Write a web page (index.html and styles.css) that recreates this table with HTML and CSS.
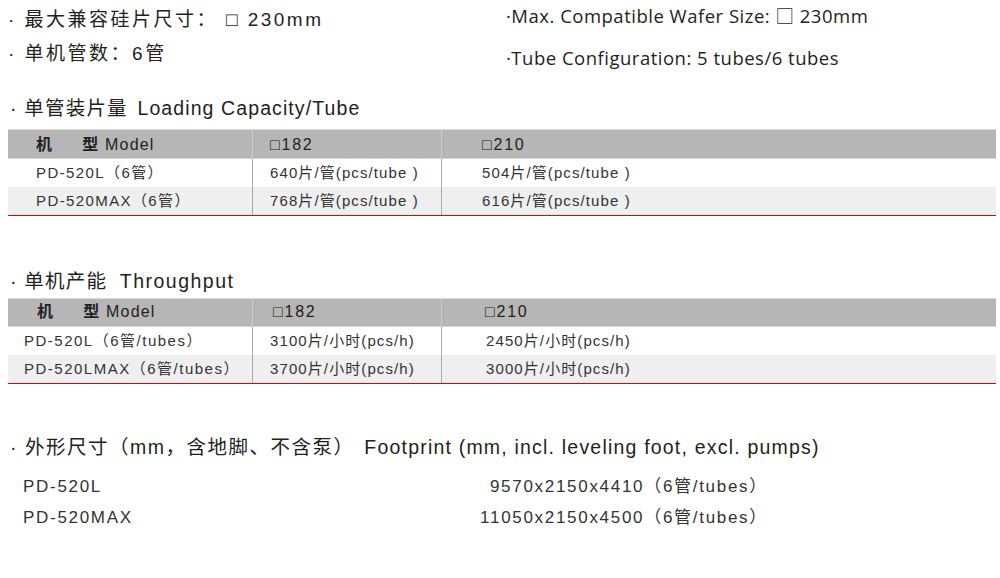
FILE: index.html
```html
<!DOCTYPE html>
<html lang="zh-CN">
<head>
<meta charset="utf-8">
<title>PD-520 规格</title>
<link rel="stylesheet" href="styles.css">
</head>
<body>
<div class="page">
  <div class="intro">
    <ul class="intro-cn">
      <li>· 最大兼容硅片尺寸： □ 230mm</li>
      <li>· 单机管数：6管</li>
    </ul>
    <ul class="intro-en">
      <li>·Max. Compatible Wafer Size: □ 230mm</li>
      <li>·Tube Configuration: 5 tubes/6 tubes</li>
    </ul>
  </div>

  <h2 class="sec sec-load">· 单管装片量 <span class="lat">Loading Capacity/Tube</span></h2>
  <table class="spec spec-load">
    <colgroup><col class="c1"><col class="c2"><col class="c3"></colgroup>
    <thead>
      <tr><th><span class="cn-b">机</span><span class="gap"></span><span class="cn-b">型</span> Model</th><th>□182</th><th>□210</th></tr>
    </thead>
    <tbody>
      <tr><td>PD-520L（6管）</td><td>640片/管(pcs/tube )</td><td>504片/管(pcs/tube )</td></tr>
      <tr class="alt"><td>PD-520MAX（6管）</td><td>768片/管(pcs/tube )</td><td>616片/管(pcs/tube )</td></tr>
    </tbody>
  </table>

  <h2 class="sec sec-thru">· 单机产能 <span class="lat">Throughput</span></h2>
  <table class="spec spec-thru">
    <colgroup><col class="c1"><col class="c2"><col class="c3"></colgroup>
    <thead>
      <tr><th><span class="cn-b">机</span><span class="gap"></span><span class="cn-b">型</span> Model</th><th>□182</th><th>□210</th></tr>
    </thead>
    <tbody>
      <tr><td>PD-520L（6管/tubes）</td><td>3100片/小时(pcs/h)</td><td>2450片/小时(pcs/h)</td></tr>
      <tr class="alt"><td>PD-520LMAX（6管/tubes）</td><td>3700片/小时(pcs/h)</td><td>3000片/小时(pcs/h)</td></tr>
    </tbody>
  </table>

  <h2 class="sec sec-fp">· 外形尺寸（mm，含地脚、不含泵） <span class="lat">Footprint (mm, incl. leveling foot, excl. pumps)</span></h2>
  <div class="fp">
    <div class="fp-row"><span>PD-520L</span><span>9570x2150x4410（6管/tubes）</span></div>
    <div class="fp-row"><span>PD-520MAX</span><span>11050x2150x4500（6管/tubes）</span></div>
  </div>
</div>
</body>
</html>
```

FILE: styles.css
```css
* { box-sizing: border-box; }
html, body { margin: 0; padding: 0; background: #fff; }
body {
  font-family: "Liberation Sans", "Noto Sans CJK SC", sans-serif;
  color: #231f20;
}
.page { width: 1000px; padding: 0 4px 0 8px; }

.intro { display: flex; height: 70px; }
.intro ul { list-style: none; margin: 0; padding: 0; }
.intro .intro-cn {
  width: 498px;
  padding-top: 3px;
  font-size: 19px;
  letter-spacing: 2.5px;
}
.intro-cn li { line-height: 34px; }
.intro .intro-en {
  font-family: "Open Sans", "Noto Sans CJK SC", sans-serif;
  font-size: 18.5px;
  letter-spacing: 0.5px;
  display: flex;
  flex-direction: column;
  gap: 10px;
}
.intro-en li { line-height: 32px; }

.sec {
  margin: 0;
  padding-left: 2px;
  font-weight: normal;
  font-size: 19.5px;
  letter-spacing: 1.2px;
  line-height: 30px;
}
.sec .lat { letter-spacing: 1.1px; }
.sec-load { margin-top: 23px; margin-bottom: 6px; }
.sec-load .lat { margin-left: 3px; }
.sec-thru { margin-top: 50px; margin-bottom: 2px; }
.sec-thru .lat { margin-left: 6px; letter-spacing: 1.5px; }
.sec-fp { margin-top: 48px; margin-bottom: 9px; letter-spacing: 1.5px; }
.sec-fp .lat { margin-left: 3px; letter-spacing: 1.2px; }

.spec {
  width: 988px;
  table-layout: fixed;
  border-collapse: separate;
  border-spacing: 0;
  border-top: 1px solid #d7d8d7;
  border-bottom: 1px solid #e60012;
  font-size: 15px;
  letter-spacing: 1.1px;
  color: #333;
}
.spec .c1 { width: 244px; }
.spec .c2 { width: 189px; }
.spec .c3 { width: 555px; }
.spec th {
  background: #b5b6b5;
  font-weight: normal;
  font-size: 16px;
  letter-spacing: 1.8px;
  text-align: left;
  color: #222;
  line-height: 25px;
  padding-top: 2px;
  border-bottom: 1px solid #d4d5d4;
  white-space: nowrap;
}
.spec td {
  line-height: 28px;
  padding: 0;
  white-space: nowrap;
}
.spec th + th { border-left: 1px solid #cdcdcd; }
.spec td + td { border-left: 1px solid #a9a9a9; }
.spec tr.alt td { background: #eeefee; }
.spec th:nth-child(1), .spec td:nth-child(1) { padding-left: 28px; }
.spec th:nth-child(2), .spec td:nth-child(2) { padding-left: 17px; }
.spec th:nth-child(3), .spec td:nth-child(3) { padding-left: 40px; }
.spec td:nth-child(1) { letter-spacing: 1.4px; }
.spec th:nth-child(1) { letter-spacing: 1.2px; }
.cn-b { font-weight: bold; }
.gap { display: inline-block; width: 29px; }

.spec-thru th:nth-child(1) { padding-left: 29px; }
.spec-thru td:nth-child(1) { padding-left: 16px; letter-spacing: 1.5px; }
.spec-thru th:nth-child(2) { padding-left: 20px; }
.spec-thru th:nth-child(3) { padding-left: 43px; }
.spec-thru td:nth-child(3) { padding-left: 44px; }
.spec-thru th { line-height: 26px; padding-top: 0; }

.fp { padding-left: 15px; width: 760px; font-size: 17px; letter-spacing: 1.7px; color: #333; }
.fp-row { display: flex; justify-content: space-between; line-height: 31px; }
```
